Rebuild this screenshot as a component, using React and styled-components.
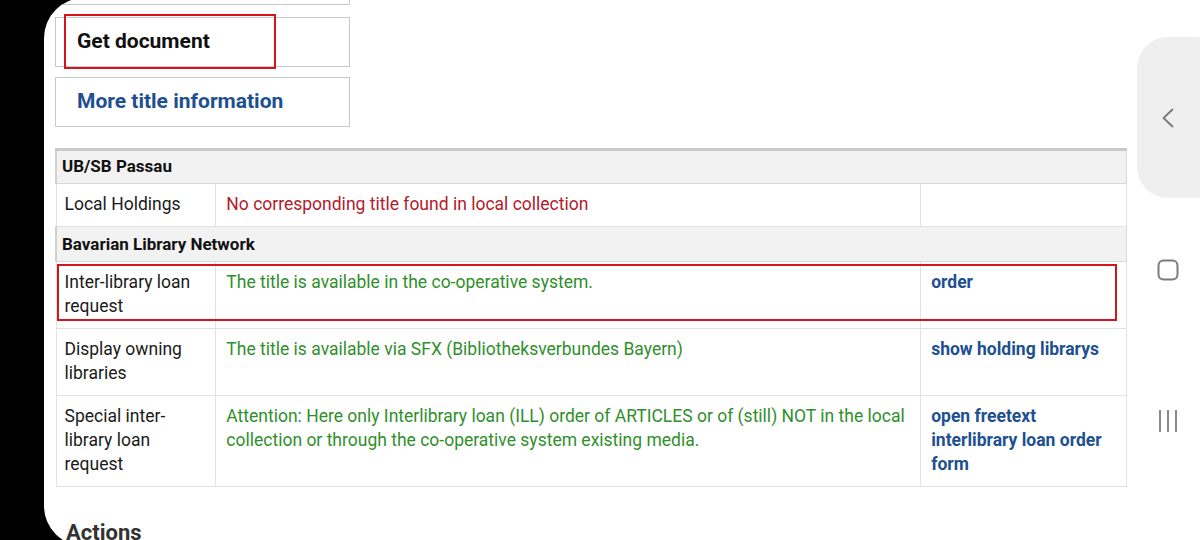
import React from "react";
import styled, { createGlobalStyle } from "styled-components";

const Global = createGlobalStyle`
  html, body { margin: 0; padding: 0; background: #000; overflow: hidden; }
  body { font-family: Roboto, "Noto Sans", Arial, sans-serif; }
  * { box-sizing: border-box; }
`;

const Frame = styled.div`
  width: 1200px;
  height: 540px;
  overflow: hidden;
  background: #000;
  padding-left: 44px;
`;

const Screen = styled.div`
  margin-top: -2px;
  height: 548px;
  background: #fff;
  border-radius: 40px 0 0 40px;
  display: flex;
  overflow: hidden;
`;

const Page = styled.div`
  width: 1091px;
  padding-left: 11px;
  display: flex;
  flex-direction: column;
  align-items: flex-start;
`;

const LinkBox = styled.div`
  position: relative;
  width: 295px;
  height: ${(p) => p.$h || 50}px;
  margin-top: ${(p) => p.$mt || 0}px;
  border: 1px solid #c9c9c9;
  display: flex;
  align-items: center;
  padding: 0 0 3px 21px;
  font-size: 21px;
  font-weight: 700;
  color: ${(p) => (p.$link ? "#1d4f91" : "#111")};
`;

const Mark = styled.div`
  position: absolute;
  left: ${(p) => p.$l}px;
  top: ${(p) => p.$t}px;
  width: ${(p) => p.$w}px;
  height: ${(p) => p.$h}px;
  border: 2px solid #d4161c;
  pointer-events: none;
`;

const Table = styled.table`
  margin-top: 21px;
  width: 1072px;
  border-collapse: collapse;
  font-size: 17.5px;
  line-height: 24px;
`;

const Head = styled.th`
  background: #f2f2f2;
  text-align: left;
  font-weight: 700;
  font-size: 17px;
  color: #111;
  padding: ${(p) => (p.$first ? "3px 5px 5px" : "5px 5px 5px")};
  border: 1px solid #d9d9d9;
  border-left: 2px solid #d0d0d0;
  border-top: ${(p) => (p.$first ? "3px solid #c9c9c9" : "1px solid #dedede")};
`;

const Cell = styled.td`
  position: relative;
  vertical-align: top;
  padding: 8px 10px 10px;
  border: 1px solid #e2e2e2;
  width: ${(p) => p.$w}px;
  color: ${(p) =>
    p.$tone === "red" ? "#b0202a" : p.$tone === "green" ? "#2f8f2b" : p.$tone === "link" ? "#1d4f91" : "#1a1a1a"};
  font-weight: ${(p) => (p.$tone === "link" ? 700 : 400)};
  padding-left: ${(p) => (p.$first ? 8 : 10)}px;
`;

const Actions = styled.h2`
  margin: 33px 0 0 11px;
  font-size: 22px;
  font-weight: 700;
  color: #333;
`;

const Nav = styled.div`
  width: 65px;
  flex: none;
  overflow: hidden;
  display: flex;
  flex-direction: column;
  align-items: flex-start;
`;

const Pill = styled.div`
  margin-top: 39px;
  margin-left: 2px;
  width: 90px;
  height: 161px;
  border-radius: 31px;
  background: #efefef;
  display: flex;
  align-items: center;
  padding-left: 25px;
`;

const NavIcon = styled.div`
  align-self: center;
  margin-top: ${(p) => p.$mt}px;
  display: flex;
`;

export default function App() {
  const rows = [
    { head: "UB/SB Passau", first: true },
    { label: "Local Holdings", text: "No corresponding title found in local collection", tone: "red", link: "" },
    { head: "Bavarian Library Network" },
    { label: "Inter-library loan request", text: "The title is available in the co-operative system.", tone: "green", link: "order", mark: true },
    { label: "Display owning libraries", text: "The title is available via SFX (Bibliotheksverbundes Bayern)", tone: "green", link: "show holding librarys" },
    {
      label: "Special inter-library loan request",
      text: "Attention: Here only Interlibrary loan (ILL) order of ARTICLES or of (still) NOT in the local collection or through the co-operative system existing media.",
      tone: "green",
      link: "open freetext interlibrary loan order form",
    },
  ];
  return (
    <Frame>
      <Global />
      <Screen>
        <Page>
          <LinkBox $h={7} />
          <LinkBox $mt={12}>
            Get document
            <Mark $l={8} $t={-4} $w={212} $h={55} />
          </LinkBox>
          <LinkBox $mt={10} $link>
            More title information
          </LinkBox>
          <Table>
            <tbody>
              {rows.map((r, i) =>
                r.head ? (
                  <tr key={i}>
                    <Head colSpan={3} $first={r.first}>
                      {r.head}
                    </Head>
                  </tr>
                ) : (
                  <tr key={i}>
                    <Cell $w={160} $first>
                      {r.mark && <Mark $l={0} $t={2} $w={1060} $h={57} />}
                      {r.label}
                    </Cell>
                    <Cell $w={706} $tone={r.tone}>
                      {r.text}
                    </Cell>
                    <Cell $w={206} $tone="link">
                      {r.link}
                    </Cell>
                  </tr>
                )
              )}
            </tbody>
          </Table>
          <Actions>Actions</Actions>
        </Page>
        <Nav>
          <Pill>
            <svg width="12" height="20" viewBox="0 0 12 20">
              <path d="M10.5 1.5 L1.5 10 L10.5 18.5" fill="none" stroke="#777" strokeWidth="1.8" strokeLinecap="round" strokeLinejoin="round" />
            </svg>
          </Pill>
          <NavIcon $mt={61}>
            <svg width="22" height="22" viewBox="0 0 22 22">
              <rect x="1.5" y="1.5" width="19" height="19" rx="5" fill="none" stroke="#7a7a7a" strokeWidth="2" />
            </svg>
          </NavIcon>
          <NavIcon $mt={128}>
            <svg width="20" height="24" viewBox="0 0 20 24">
              <path d="M2 1 V23 M10 1 V23 M18 1 V23" stroke="#8a8a8a" strokeWidth="2" />
            </svg>
          </NavIcon>
        </Nav>
      </Screen>
    </Frame>
  );
}
